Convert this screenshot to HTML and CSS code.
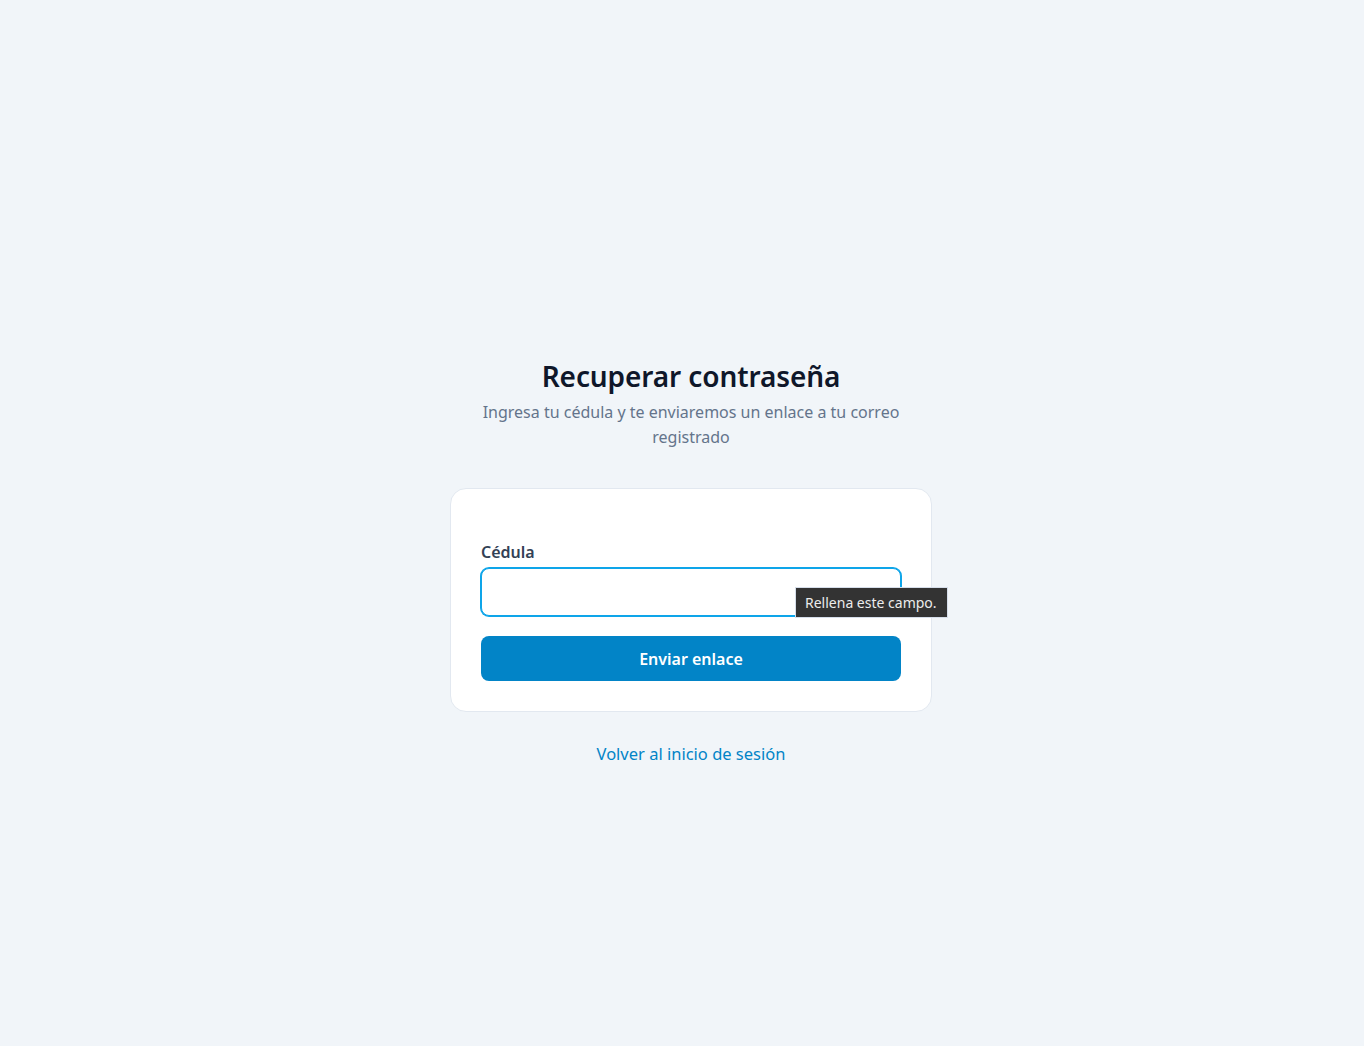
FILE: index.html
```html
<!DOCTYPE html>
<html lang="es">
<head>
<meta charset="utf-8">
<title>Recuperar contraseña</title>
<link rel="stylesheet" href="styles.css">
</head>
<body>
<main class="page">
  <div class="panel">
    <header class="intro">
      <h1 class="title">Recuperar contraseña</h1>
      <p class="subtitle">Ingresa tu cédula y te enviaremos un enlace a tu correo registrado</p>
    </header>

    <form class="card">
      <div class="field">
        <label class="label" for="cedula">Cédula</label>
        <div class="input-wrap">
          <input class="input" id="cedula" type="text" required>
          <div class="bubble">Rellena este campo.</div>
        </div>
      </div>
      <button class="btn" type="submit">Enviar enlace</button>
    </form>

    <a class="back" href="#">Volver al inicio de sesión</a>
  </div>
</main>
</body>
</html>
```

FILE: styles.css
```css
* {
  box-sizing: border-box;
}

html, body {
  margin: 0;
  padding: 0;
}

body {
  background: #f1f5f9;
  font-family: "Noto Sans", "Open Sans", sans-serif;
  color: #0f172a;
}

.page {
  min-height: 100vh;
  padding: 78px 0 0 18px;
  display: flex;
  align-items: center;
  justify-content: center;
}

.panel {
  width: 482px;
  display: flex;
  flex-direction: column;
  align-items: center;
}

.intro {
  text-align: center;
  max-width: 470px;
}

.title {
  margin: 0;
  font-size: 28px;
  line-height: 36px;
  font-weight: 600;
  color: #0f172a;
  letter-spacing: -0.1px;
}

.subtitle {
  margin: 6px 0 0;
  font-size: 16px;
  line-height: 25px;
  color: #64748b;
}

.card {
  margin-top: 38px;
  width: 482px;
  background: #ffffff;
  border: 1px solid #e2e8f0;
  border-radius: 16px;
  padding: 51px 30px 30px;
  display: flex;
  flex-direction: column;
  gap: 20px;
}

.field {
  display: flex;
  flex-direction: column;
  gap: 4px;
}

.label {
  font-size: 16px;
  line-height: 24px;
  font-weight: 600;
  color: #334155;
}

.input-wrap {
  position: relative;
}

.input {
  display: block;
  width: 100%;
  height: 48px;
  border: 1px solid #0ea5e9;
  box-shadow: 0 0 0 1px #0ea5e9;
  border-radius: 8px;
  background: #ffffff;
  outline: none;
  font: inherit;
  padding: 0 14px;
}

/* native-style validation bubble */
.bubble {
  position: absolute;
  left: 314px;
  top: 19px;
  height: 31px;
  padding: 0 10px 0 9px;
  display: flex;
  align-items: center;
  background: #333333;
  border: 1px solid #d6deea;
  color: #ececec;
  font-size: 14px;
  white-space: nowrap;
}

.btn {
  height: 45px;
  border: none;
  border-radius: 8px;
  background: #0284c7;
  color: #ffffff;
  font: inherit;
  font-size: 16px;
  font-weight: 600;
  cursor: pointer;
}

.back {
  margin-top: 30px;
  font-size: 16.5px;
  line-height: 24px;
  color: #0284c7;
  text-decoration: none;
}
```
